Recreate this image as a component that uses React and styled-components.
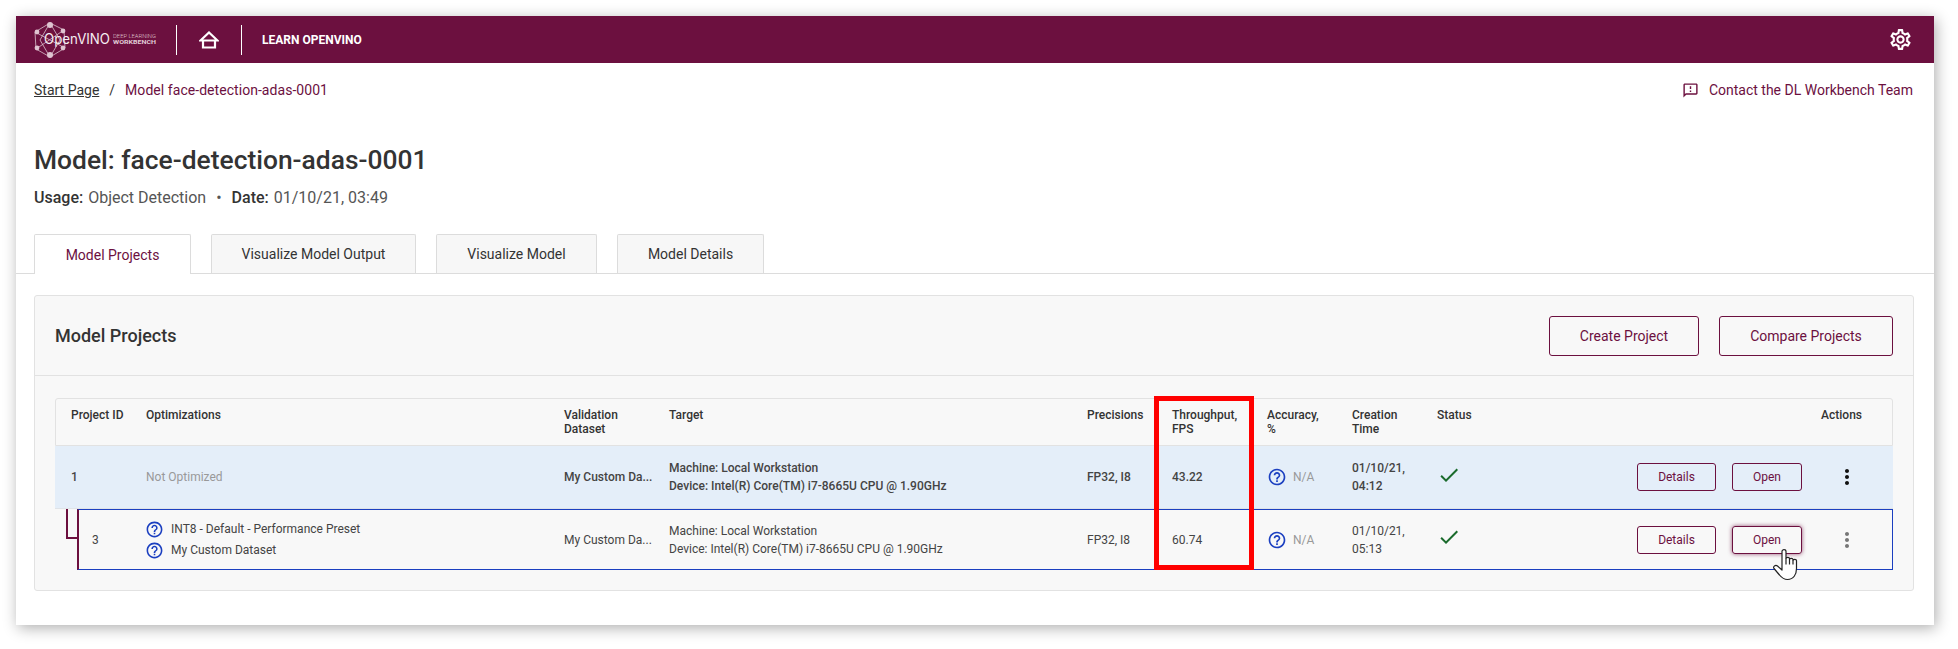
import React from 'react';
import styled, { createGlobalStyle } from 'styled-components';
import { MdOutlineSettings, MdOutlineFeedback, MdCheck, MdMoreVert, MdHelpOutline } from 'react-icons/md';

const MAROON = '#6c103f';
const BLUE = '#1b3fc0';
const COLUMNS = '75px 418px 105px 418px 85px 95px 85px 85px 150px 1fr';

const GlobalStyle = createGlobalStyle`
  html, body {
    margin: 0;
    background: #fff;
    font-family: Roboto, "Liberation Sans", sans-serif;
    color: #333;
  }
`;

const Page = styled.div`
  padding: 16px 24px 24px 16px;
`;

const Shell = styled.div`
  height: 609px;
  display: flex;
  flex-direction: column;
  background: #fff;
  box-shadow: 2px 3px 14px rgba(0, 0, 0, 0.32);
`;

const TopBar = styled.header`
  height: 47px;
  flex: none;
  display: flex;
  align-items: center;
  padding: 0 21px 0 18px;
  background: ${MAROON};
  color: #fff;
`;

const Divider = styled.span`
  width: 1px;
  height: 30px;
  background: #fff;
`;

const HomeButton = styled.span`
  display: flex;
  width: 64px;
  justify-content: center;
`;

const TopLink = styled.span`
  margin-left: 20px;
  font-size: 12px;
  font-weight: 700;
`;

const LogoBox = styled.span`
  display: flex;
  width: 142px;
`;

const SettingsButton = styled.span`
  margin-left: auto;
  display: flex;
  font-size: 25px;
`;

const CrumbBar = styled.div`
  display: flex;
  align-items: center;
  justify-content: space-between;
  height: 18px;
  margin: 18px 21px 0 18px;
  font-size: 14px;
`;

const Crumbs = styled.div`
  display: flex;
  align-items: center;
`;

const CrumbLink = styled.a`
  color: #333;
  text-decoration: underline;
`;

const CrumbSep = styled.span`
  margin: 0 10px;
`;

const CrumbCurrent = styled.span`
  color: ${MAROON};
  letter-spacing: 0.05px;
`;

const ContactLink = styled.a`
  display: flex;
  align-items: center;
  gap: 10px;
  color: ${MAROON};
  svg {
    font-size: 17px;
  }
`;

const Title = styled.h1`
  margin: 45px 0 0 18px;
  font-size: 26.4px;
  line-height: 32px;
  font-weight: 500;
  color: #333;
`;

const MetaLine = styled.div`
  margin: 13px 0 0 18px;
  font-size: 16px;
  line-height: 18px;
  color: #555;
  b {
    font-weight: 500;
    color: #333;
    margin-right: 1px;
  }
`;

const MetaDot = styled.span`
  margin: 0 10px;
`;

const TabBar = styled.div`
  display: flex;
  gap: 20px;
  height: 39px;
  margin-top: 27px;
  padding-left: 18px;
  border-bottom: 1px solid #dcdcdc;
`;

const Tab = styled.div`
  width: ${p => p.$w}px;
  box-sizing: border-box;
  display: flex;
  align-items: center;
  justify-content: center;
  border: 1px solid #dcdcdc;
  border-bottom: 0;
  border-radius: 2px 2px 0 0;
  font-size: 14px;
  background: ${p => (p.$active ? '#fff' : '#f7f7f7')};
  color: ${p => (p.$active ? MAROON : '#333')};
  height: ${p => (p.$active ? '40px' : '39px')};
`;

const Panel = styled.section`
  margin: 21px 20px 0 18px;
  height: 296px;
  box-sizing: border-box;
  background: #f8f8f8;
  border: 1px solid #e2e2e2;
  border-radius: 3px;
`;

const PanelHead = styled.div`
  height: 80px;
  box-sizing: border-box;
  display: flex;
  align-items: center;
  padding: 0 20px;
  border-bottom: 1px solid #e2e2e2;
`;

const PanelTitle = styled.h2`
  margin: 0 auto 0 0;
  font-size: 18px;
  font-weight: 500;
  color: #333;
`;

const ActionButton = styled.button`
  display: inline-flex;
  align-items: center;
  justify-content: center;
  box-sizing: border-box;
  width: ${p => p.$w}px;
  height: ${p => (p.$small ? 28 : 40)}px;
  margin-left: ${p => p.$gap}px;
  padding: 0;
  border: 1px solid ${MAROON};
  border-radius: 3px;
  background: transparent;
  font-family: inherit;
  font-size: ${p => (p.$small ? 12 : 14)}px;
  color: ${MAROON};
  box-shadow: ${p => (p.$hover ? `0 0 4px rgba(108, 16, 63, 0.7)` : 'none')};
`;

const TableWrap = styled.div`
  position: relative;
  margin: 22px 20px 0;
`;

const HeadRow = styled.div`
  display: grid;
  grid-template-columns: ${COLUMNS};
  height: 48px;
  box-sizing: border-box;
  padding: 9px 0 0 15px;
  border: 1px solid #e2e2e2;
  border-radius: 3px 3px 0 0;
  font-size: 12px;
  line-height: 14px;
  font-weight: 500;
  color: #333;
`;

const HeadCell = styled.div`
  white-space: pre-line;
  text-align: ${p => (p.$right ? 'right' : 'left')};
  padding-right: ${p => (p.$right ? '30px' : 0)};
`;

const ParentRow = styled.div`
  display: grid;
  grid-template-columns: ${COLUMNS};
  align-items: center;
  height: 63px;
  box-sizing: border-box;
  padding-left: 16px;
  background: #e4eef9;
  border-bottom: 1px solid #dfe3e8;
  font-size: 12px;
  line-height: 18px;
  font-weight: 500;
  color: #444;
`;

const ChildRow = styled.div`
  display: grid;
  grid-template-columns: 54px 418px 105px 418px 85px 95px 85px 85px 150px 1fr;
  align-items: center;
  height: 61px;
  box-sizing: border-box;
  margin-left: 22px;
  padding-left: 13px;
  border-left: 2px solid ${MAROON};
  border-top: 1px solid ${BLUE};
  border-right: 1px solid ${BLUE};
  border-bottom: 1px solid ${BLUE};
  font-size: 12px;
  line-height: 18px;
  color: #444;
`;

const Connector = styled.span`
  position: absolute;
  left: 11px;
  top: 111px;
  width: 10px;
  height: 28px;
  border-left: 2px solid ${MAROON};
  border-bottom: 2px solid ${MAROON};
`;

const Muted = styled.span`
  color: #999;
  font-weight: 400;
`;

const OptimList = styled.div`
  display: flex;
  flex-direction: column;
  gap: 2px;
`;

const OptimItem = styled.div`
  display: flex;
  align-items: center;
  gap: 7px;
  svg {
    font-size: 19px;
    color: ${BLUE};
    margin-left: -1px;
  }
`;

const NaCell = styled.div`
  display: flex;
  align-items: center;
  gap: 6px;
  svg {
    font-size: 20px;
    color: ${BLUE};
  }
`;

const Check = styled(MdCheck)`
  font-size: 24px;
  color: #1a6b2c;
`;

const RowActions = styled.div`
  display: flex;
  align-items: center;
`;

const DotsButton = styled.span`
  display: flex;
  margin-left: 33px;
  font-size: 24px;
  color: ${p => (p.$dim ? '#777' : '#111')};
`;

const RedBox = styled.div`
  position: absolute;
  left: 1099px;
  top: -2px;
  width: 100px;
  height: 174px;
  box-sizing: border-box;
  border: 5px solid #f00;
  pointer-events: none;
`;

const Cursor = styled.svg`
  position: absolute;
  left: 1718px;
  top: 151px;
  width: 26px;
  height: 32px;
`;

function Logo() {
  return (
    <svg width="124" height="36" viewBox="0 0 124 36" fill="none">
      <g stroke="#d9c2cd" strokeWidth="0.8">
        <path d="M16 1 L30 8 L31 26 L16 35 L2 27 L1 10 Z" />
        <path d="M16 1 L6 18 L16 35 M16 1 L26 18 L16 35 M1 10 L31 26 M30 8 L2 27" />
      </g>
      <g fill="#e0c4d1">
        <circle cx="16" cy="3" r="3" />
        <circle cx="29" cy="9" r="2.4" />
        <circle cx="3" cy="10" r="2.4" />
        <circle cx="3" cy="26" r="2.4" />
        <circle cx="29" cy="26" r="2.4" />
        <circle cx="16" cy="33" r="3" />
      </g>
      <text x="10" y="22" textLength="66" lengthAdjust="spacingAndGlyphs" fontFamily="Inter, sans-serif" fontWeight="400" fontSize="14" fill="#f6eef2">OpenVINO</text>
      <text x="79" y="15.5" textLength="43" lengthAdjust="spacingAndGlyphs" fontFamily="Roboto, sans-serif" fontWeight="300" fontSize="5.6" fill="#e0ccd6">DEEP LEARNING</text>
      <text x="79" y="22" textLength="43" lengthAdjust="spacingAndGlyphs" fontFamily="Roboto, sans-serif" fontWeight="700" fontSize="5.4" fill="#e0ccd6">WORKBENCH</text>
    </svg>
  );
}

function HomeIcon() {
  return (
    <svg width="20" height="18" viewBox="0 0 20 18" fill="none">
      <path d="M4 9.5V16.5H16V9.5M1.5 9.5L10 1.5L18.5 9.5Z" stroke="#fff" strokeWidth="2.2" strokeLinejoin="miter" />
    </svg>
  );
}

function HandCursor() {
  return (
    <Cursor viewBox="0 0 26 32" fill="#fff" stroke="#222" strokeWidth="1.2" strokeLinejoin="round">
      <path d="M9 2.5c0-2.500 4-2.500 4 0V9.500c0-1.500 3.500-1.500 3.500 0v1c0-1.500 3.500-1.500 3.500 0v1c0-1.500 3.500-1.500 3.500 0v8c0 6-3 11-9 11-4 0-6-2-8-4.500L1 19.500c-1.500-2 1.500-4 3.500-2.500L9 21Z" />
      <path d="M13 9.500v6M16.500 10.500v5M20 11.500v4" fill="none" />
    </Cursor>
  );
}

const HEADERS = [
  'Project ID',
  'Optimizations',
  'Validation\nDataset',
  'Target',
  'Precisions',
  'Throughput,\nFPS',
  'Accuracy,\n%',
  'Creation\nTime',
  'Status',
];

const TABS = [
  { label: 'Model Projects', w: 157, active: true },
  { label: 'Visualize Model Output', w: 205 },
  { label: 'Visualize Model', w: 161 },
  { label: 'Model Details', w: 147 },
];

function TargetCell() {
  return (
    <div>
      Machine: Local Workstation
      <br />
      Device: Intel(R) Core(TM) i7-8665U CPU @ 1.90GHz
    </div>
  );
}

function NotAvailable() {
  return (
    <NaCell>
      <MdHelpOutline />
      <Muted>N/A</Muted>
    </NaCell>
  );
}

function Actions({ child }) {
  return (
    <RowActions>
      <ActionButton $small $w={79} $gap={50}>Details</ActionButton>
      <ActionButton $small $w={70} $gap={16} $hover={child}>Open</ActionButton>
      <DotsButton $dim={child}><MdMoreVert /></DotsButton>
    </RowActions>
  );
}

export default function App() {
  return (
    <Page>
      <GlobalStyle />
      <Shell>
        <TopBar>
          <LogoBox><Logo /></LogoBox>
          <Divider />
          <HomeButton><HomeIcon /></HomeButton>
          <Divider />
          <TopLink>LEARN OPENVINO</TopLink>
          <SettingsButton><MdOutlineSettings /></SettingsButton>
        </TopBar>

        <CrumbBar>
          <Crumbs>
            <CrumbLink>Start Page</CrumbLink>
            <CrumbSep>/</CrumbSep>
            <CrumbCurrent>Model face-detection-adas-0001</CrumbCurrent>
          </Crumbs>
          <ContactLink>
            <MdOutlineFeedback />
            Contact the DL Workbench Team
          </ContactLink>
        </CrumbBar>

        <Title>Model: face-detection-adas-0001</Title>
        <MetaLine>
          <b>Usage:</b> Object Detection<MetaDot>•</MetaDot><b>Date:</b> 01/10/21, 03:49
        </MetaLine>

        <TabBar>
          {TABS.map(t => (
            <Tab key={t.label} $w={t.w} $active={t.active}>{t.label}</Tab>
          ))}
        </TabBar>

        <Panel>
          <PanelHead>
            <PanelTitle>Model Projects</PanelTitle>
            <ActionButton $w={150}>Create Project</ActionButton>
            <ActionButton $w={174} $gap={20}>Compare Projects</ActionButton>
          </PanelHead>

          <TableWrap>
            <HeadRow>
              {HEADERS.map(h => <HeadCell key={h}>{h}</HeadCell>)}
              <HeadCell $right>Actions</HeadCell>
            </HeadRow>

            <ParentRow>
              <div>1</div>
              <Muted>Not Optimized</Muted>
              <div>My Custom Da...</div>
              <TargetCell />
              <div>FP32, I8</div>
              <div>43.22</div>
              <NotAvailable />
              <div>01/10/21,<br />04:12</div>
              <div><Check /></div>
              <Actions />
            </ParentRow>

            <ChildRow>
              <div>3</div>
              <OptimList>
                <OptimItem><MdHelpOutline />INT8 - Default - Performance Preset</OptimItem>
                <OptimItem><MdHelpOutline />My Custom Dataset</OptimItem>
              </OptimList>
              <div>My Custom Da...</div>
              <TargetCell />
              <div>FP32, I8</div>
              <div>60.74</div>
              <NotAvailable />
              <div>01/10/21,<br />05:13</div>
              <div><Check /></div>
              <Actions child />
            </ChildRow>

            <Connector />
            <RedBox />
            <HandCursor />
          </TableWrap>
        </Panel>
      </Shell>
    </Page>
  );
}
